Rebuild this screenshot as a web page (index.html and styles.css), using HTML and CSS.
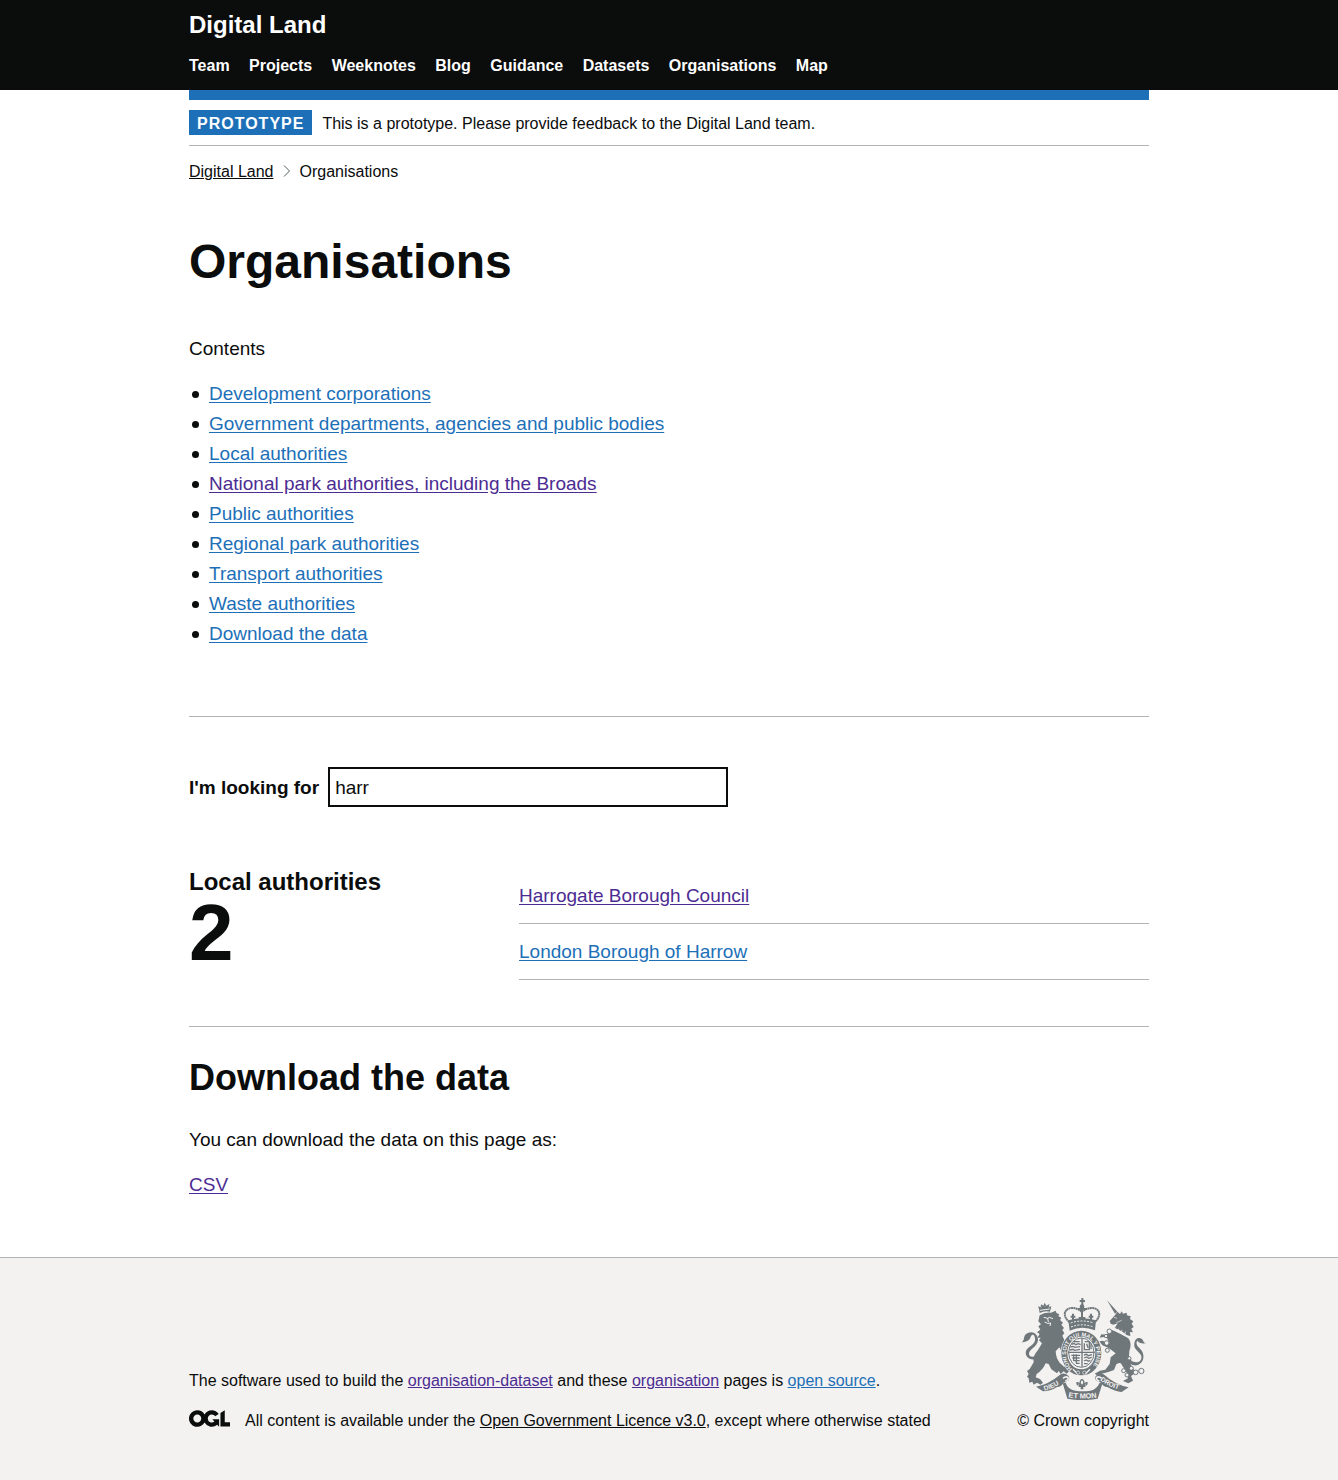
FILE: index.html
```html
<!DOCTYPE html>
<html lang="en">
<head>
<meta charset="utf-8">
<meta name="viewport" content="width=device-width, initial-scale=1">
<title>Organisations | Digital Land</title>
<link rel="stylesheet" href="styles.css">
</head>
<body>
<header class="header">
  <div class="container">
    <a class="header-title" href="#">Digital Land</a>
    <nav aria-label="Main">
      <ul class="nav">
        <li><a href="#">Team</a></li>
        <li><a href="#">Projects</a></li>
        <li><a href="#">Weeknotes</a></li>
        <li><a href="#">Blog</a></li>
        <li><a href="#">Guidance</a></li>
        <li><a href="#">Datasets</a></li>
        <li><a href="#">Organisations</a></li>
        <li><a href="#">Map</a></li>
      </ul>
    </nav>
  </div>
</header>
<div class="container">
  <div class="phase-banner">
    <strong class="tag">PROTOTYPE</strong>
    <span class="phase-text">This is a prototype. Please provide feedback to the Digital Land team.</span>
  </div>
  <nav aria-label="Breadcrumb">
    <ol class="breadcrumbs">
      <li><a href="#">Digital Land</a></li>
      <li><svg class="chevron" width="8" height="12" viewBox="0 0 8 12" aria-hidden="true"><path d="M1 .5 6.500 6 1 11.500" fill="none" stroke="#505a5f"/></svg>Organisations</li>
    </ol>
  </nav>
  <main class="main">
    <h1>Organisations</h1>
    <p>Contents</p>
    <ul class="contents">
      <li><a href="#">Development corporations</a></li>
      <li><a href="#">Government departments, agencies and public bodies</a></li>
      <li><a href="#results">Local authorities</a></li>
      <li><a class="visited" href="#">National park authorities, including the Broads</a></li>
      <li><a href="#">Public authorities</a></li>
      <li><a href="#">Regional park authorities</a></li>
      <li><a href="#">Transport authorities</a></li>
      <li><a href="#">Waste authorities</a></li>
      <li><a href="#download">Download the data</a></li>
    </ul>
    <hr>
    <form class="filter">
      <label for="filter">I'm looking for</label>
      <input id="filter" type="text" value="harr">
    </form>
    <section class="results" id="results">
      <h2 class="results-heading">Local authorities <span class="count">2</span></h2>
      <ul class="results-list">
        <li><a class="visited" href="#">Harrogate Borough Council</a></li>
        <li><a href="#">London Borough of Harrow</a></li>
      </ul>
    </section>
    <section class="download" id="download">
      <h2>Download the data</h2>
      <p>You can download the data on this page as:</p>
      <p><a class="visited" href="#">CSV</a></p>
    </section>
  </main>
</div>
<footer class="footer">
  <div class="container footer-row">
    <div class="footer-text">
      <p>The software used to build the <a class="visited" href="#">organisation-dataset</a> and these <a class="visited" href="#">organisation</a> pages is <a href="#">open source</a>.</p>
      <div class="licence">
        <svg class="ogl" width="41" height="17" viewBox="0 0 483.2 195.7" role="img" aria-label="OGL"><path fill="currentColor" d="M421.5 142.8V.1l-50.7 32.3v161.1h112.4v-50.7zm-122.3-9.6A47.12 47.12 0 0 1 221 97.8c0-26 21.1-47.1 47.1-47.1 16.7 0 31.4 8.7 39.7 21.8l42.7-27.2A97.63 97.63 0 0 0 268.1 0c-36.5 0-68.3 20.1-85.1 49.7A98 98 0 0 0 97.8 0C43.9 0 0 43.9 0 97.8s43.9 97.8 97.8 97.8c36.5 0 68.3-20.1 85.1-49.7a97.76 97.76 0 0 0 149.6 25.4l19.4 22.2h3v-87.8h-80l24.3 27.5zM97.8 145c-26 0-47.1-21.1-47.1-47.1s21.1-47.1 47.1-47.1 47.1 21.1 47.1 47.1S123.8 145 97.8 145"/></svg>
        <span>All content is available under the <a class="plain" href="#">Open Government Licence v3.0</a>, except where otherwise stated</span>
      </div>
    </div>
    <a class="crown" href="#">
      <svg class="crest" width="125" height="102" viewBox="32 24 375 306" aria-hidden="true">
        <!-- lion -->
        <g fill="#6f777b">
          <path d="M88 69 86 57 83 49 91 52 92 43 99 47 103 38 108 47 117 42 116 51 123 49 119 65Q103 61 88 69Z"/>
          <path d="M88 76Q103 66 122 68L136 62 139 70 147 72 144 78 153 84 149 90 158 98 153 104 161 114 156 119 162 130 156 137Q162 150 167 160L182 176 186 190 177 187 178 196 169 190 168 198 160 189Q151 183 147 172L136 184Q137 205 148 218L161 230 173 224 188 237 187 247 177 243 169 251 160 244 151 252 145 243 140 250 123 238 115 222 106 220Q97 241 79 252L76 262 89 267 98 278 91 284 80 278 70 284 66 275 57 278 55 265 50 260 55 252 50 243 58 237 70 217Q65 200 83 180L95 160 86 151 91 143 81 143 88 132 80 127 90 119 84 109 92 103 84 94Z"/>
        </g>
        <path d="M76 208C50 212 39 189 51 176C65 163 79 158 73 140C70 130 61 135 60 144C56 154 42 155 34 158C46 147 36 138 51 130C67 121 83 132 83 150C82 170 58 176 56 190C55 202 67 202 78 198Z" fill="#6f777b"/>
        <path d="M100 82 112 85 117 82 128 86M103 96Q112 103 121 99L119 108M112 84 114 96" fill="none" stroke="#f3f2f1" stroke-width="3"/>
        <path d="M89 61 118 57M93 53v1M104 50v1M115 53v1" fill="none" stroke="#f3f2f1" stroke-width="3"/>
        <!-- unicorn -->
        <g fill="#6f777b">
          <path d="M290 31 321 65 314 71Z"/>
          <path d="M298 93 315 74 321 65 329 72 334 64 338 71 349 68 350 76 361 79 359 87 369 94 364 101 370 111 363 116 368 127 359 126 360 138 349 136Q341 125 313 114L322 100 309 104 301 101Z"/>
          <path d="M307 120Q328 130 354 145Q366 160 357 184L356 199 363 210 361 223 371 240 376 249 362 258 368 272 354 280 338 273 353 265 350 249 335 226Q332 214 318 223L311 240 294 246 274 251 265 259 253 251 269 242 285 239 298 222 301 202 316 190 295 174 276 166 267 154 278 152 286 158 298 160 290 145 280 141 268 143 273 133 287 134Z"/>
          <path d="M355 208C377 224 396 217 393 198C388 184 369 179 372 161C374 145 383 143 390 145C403 149 394 156 407 160C393 161 384 159 382 152C375 157 379 167 388 175C411 197 396 229 371 226C361 224 352 217 351 213Z"/>
        </g>
        <path d="M311 82 320 85M318 98 334 91M307 119 354 139M316 113 310 123M325 116 322 127M335 119 333 132M346 124 342 137" fill="none" stroke="#f3f2f1" stroke-width="2"/>
        <g fill="#f3f2f1" stroke="#6f777b" stroke-width="3">
          <circle cx="297" cy="124" r="7"/><circle cx="287" cy="138" r="5"/><circle cx="289" cy="159" r="7"/><circle cx="291" cy="181" r="6"/><circle cx="340" cy="242" r="6"/><circle cx="350" cy="255" r="6"/><circle cx="363" cy="235" r="6"/><circle cx="376" cy="247" r="7"/><circle cx="393" cy="243" r="8"/><circle cx="357" cy="205" r="5"/>
        </g>
        <!-- garter and shield -->
        <ellipse cx="213" cy="189" rx="62" ry="69" fill="#f3f2f1"/>
        <ellipse cx="213" cy="189" rx="51" ry="58" fill="none" stroke="#6f777b" stroke-width="18"/>
        <path id="garter" d="M187 236A46 53 0 1 1 239 236" fill="none"/>
        <text class="motto" font-size="17" fill="#f3f2f1"><textPath href="#garter">HONI SOIT QUI MAL Y PENSE</textPath></text>
        <ellipse cx="213" cy="188" rx="38" ry="44" fill="#f3f2f1" stroke="#6f777b" stroke-width="3"/>
        <path d="M215 144v86M173 187h80" stroke="#6f777b" stroke-width="4"/>
        <g fill="none" stroke="#6f777b" stroke-width="4">
          <path d="M190 155h18M184 163l7-3 5 4 8-3 7 3M180 171l8-2 6 3 15-2M179 180l9-2 5 3 16-3M223 155h14v24h-15v-19M229 161l4 12M242 160v18"/>
          <path d="M183 196h26M186 204h22M190 212h18M197 220h11M190 193v20M198 193v27M221 195l8-2 5 4 11-3M221 204l8-3 6 4 9-3M221 213l7-3 6 4 6-3M221 221h11"/>
        </g>
        <path d="M188 238 203 253M224 253 239 238" stroke="#f3f2f1" stroke-width="4"/>
        <circle cx="203" cy="248" r="5" fill="#6f777b" stroke="#f3f2f1" stroke-width="2"/>
        <circle cx="222" cy="248" r="5" fill="#6f777b" stroke="#f3f2f1" stroke-width="2"/>
        <!-- crown -->
        <g fill="none" stroke="#6f777b">
          <path d="M216 24v22M208 33h16" stroke-width="6"/>
          <path d="M177 96C153 76 164 54 185 54Q204 54 214 66Q226 54 246 54C268 55 275 76 254 96" stroke-width="6" stroke-dasharray="6 1"/>
          <path d="M215 49v31M203 57h24" stroke-width="6"/>
          <path d="M188 71v20M181 80h14M215 78v18M205 84h20M242 71v20M235 80h14" stroke-width="6"/>
        </g>
        <circle cx="215" cy="50" r="7" fill="#6f777b"/>
        <path d="M174 91Q214 78 257 91L254 121Q215 105 178 122Z" fill="#6f777b"/>
        <path d="M181 99Q215 87 250 99M182 111Q215 98 249 111" fill="none" stroke="#f3f2f1" stroke-width="3" stroke-dasharray="6 4"/>
        <!-- motto ribbon -->
        <path d="M77 290Q113 285 151 253Q163 247 174 257Q180 265 173 272L161 277Q154 291 140 291Q119 304 98 304Z" fill="#6f777b"/>
        <path d="M355 292Q315 285 280 253Q268 247 257 257Q251 265 258 272L271 277Q278 291 291 291Q314 305 334 306Z" fill="#6f777b"/>
        <path d="M158 283Q158 275 166 278Q172 298 195 302Q216 306 240 302Q260 297 268 278Q276 275 275 284L262 326Q216 335 171 326Z" fill="#6f777b"/>
        <path d="M158 265Q167 257 173 263Q176 269 165 273M274 265Q265 257 259 263Q255 269 267 273" fill="none" stroke="#f3f2f1" stroke-width="5"/>
        <path id="ribbon-left" d="M103 302Q132 295 166 270" fill="none"/>
        <path id="ribbon-mid" d="M174 322Q216 330 270 321" fill="none"/>
        <path id="ribbon-right" d="M269 271Q298 294 350 304" fill="none"/>
        <g class="motto" fill="#f3f2f1">
          <text font-size="20"><textPath href="#ribbon-left">DIEU</textPath></text>
          <text font-size="22"><textPath href="#ribbon-mid">ET MON</textPath></text>
          <text font-size="20"><textPath href="#ribbon-right">DROIT</textPath></text>
        </g>
        <path d="M215 268Q205 276 213 285V298M215 268Q225 276 217 285V298M211 286Q198 286 200 278Q206 277 211 288M219 286Q232 286 230 278Q224 277 219 288M205 289h20" fill="none" stroke="#6f777b" stroke-width="4"/>
      </svg>
      <span>© Crown copyright</span>
    </a>
  </div>
</footer>
</body>
</html>
```
FILE: styles.css
```css
* { box-sizing: border-box; }

body {
  margin: 0;
  background: #fff;
  color: #0b0c0c;
  font-family: "Liberation Sans", Arial, sans-serif;
  font-size: 19px;
  line-height: 25px;
}

h1, h2, p, ul, ol { margin: 0; padding: 0; }

a { color: #1d70b8; text-underline-offset: 2px; }
.visited { color: #4c2c92; }

.container { max-width: 960px; margin: 0 auto; }

/* Header */
.header { background: #0b0c0c; padding: 10px 0 14px; }
.header a { color: #fff; font-weight: bold; text-decoration: none; }
.header-title { display: block; font-size: 24px; line-height: 30px; margin-bottom: 16px; }

.nav {
  list-style: none;
  font-size: 16px;
  line-height: 20px;
}
.nav li { display: inline; margin-right: 15px; }

.phase-banner {
  display: flex;
  align-items: center;
  gap: 10px;
  padding: 10px 0;
  border-top: 10px solid #1d70b8;
  border-bottom: 1px solid #b1b4b6;
  font-size: 16px;
  line-height: 23px;
}

.tag {
  padding: 2px 8px 0;
  background: #1d70b8;
  color: #fff;
  letter-spacing: 1px;
}
.phase-text { padding-top: 2px; }

.breadcrumbs {
  display: flex;
  margin-top: 16px;
  list-style: none;
  font-size: 16px;
  line-height: 20px;
}
.breadcrumbs a, .plain { color: #0b0c0c; }
.breadcrumbs a, .footer a { text-underline-offset: 1px; }
.chevron { margin: 0 9px; }

/* Main content */
.main { padding: 55px 0 40px; }

h1 { margin-bottom: 49px; font-size: 48px; line-height: 50px; }

.main p { margin-bottom: 20px; }

.contents { padding-left: 20px; list-style: none; }
.contents li { display: flex; margin-bottom: 5px; }
.contents li::before {
  content: "";
  flex: none;
  width: 7px;
  height: 7px;
  margin: 10px 10px 0 -17px;
  border-radius: 50%;
  background: #0b0c0c;
}

hr { margin: 70px 0 50px; border: 0; border-top: 1px solid #b1b4b6; }

.filter { display: flex; align-items: center; gap: 9px; margin-bottom: 61px; }
.filter label { font-weight: bold; }
.filter input {
  width: 400px;
  height: 40px;
  padding: 6px 5px 4px;
  border: 2px solid #0b0c0c;
  border-radius: 0;
  font: inherit;
  color: inherit;
}

.results {
  display: grid;
  grid-template-columns: 300px 1fr;
  gap: 30px;
  padding-bottom: 46px;
  border-bottom: 1px solid #b1b4b6;
}
.results-heading { font-size: 24px; line-height: 28px; }
.count { display: block; font-size: 80px; line-height: 74px; }
.results-list { list-style: none; }
.results-list li { padding: 15px 0; border-bottom: 1px solid #b1b4b6; }

.download { padding-top: 31px; }
.download h2 { margin-bottom: 29px; font-size: 36px; line-height: 40px; }

/* Footer */
.footer {
  padding: 40px 0 48px;
  border-top: 1px solid #b1b4b6;
  background: #f3f2f1;
  font-size: 16px;
  line-height: 22px;
}
.footer-row { display: flex; justify-content: space-between; align-items: flex-end; gap: 30px; }
.footer-text p { margin-bottom: 18px; }
.licence { display: flex; gap: 15px; }
.ogl { flex: none; }
.crown {
  display: flex;
  flex-direction: column;
  align-items: center;
  gap: 10px;
  color: #0b0c0c;
  text-decoration: none;
}
.motto { font-family: "Liberation Sans", Arial, sans-serif; font-weight: bold; }

@media (max-width: 1020px) {
  .container { margin: 0 30px; }
}
@media (max-width: 640px) {
  .container { margin: 0 15px; }
  .results { grid-template-columns: 1fr; }
  .filter, .footer-row, .phase-banner { flex-wrap: wrap; }
  .filter input { width: 100%; }
}
```
